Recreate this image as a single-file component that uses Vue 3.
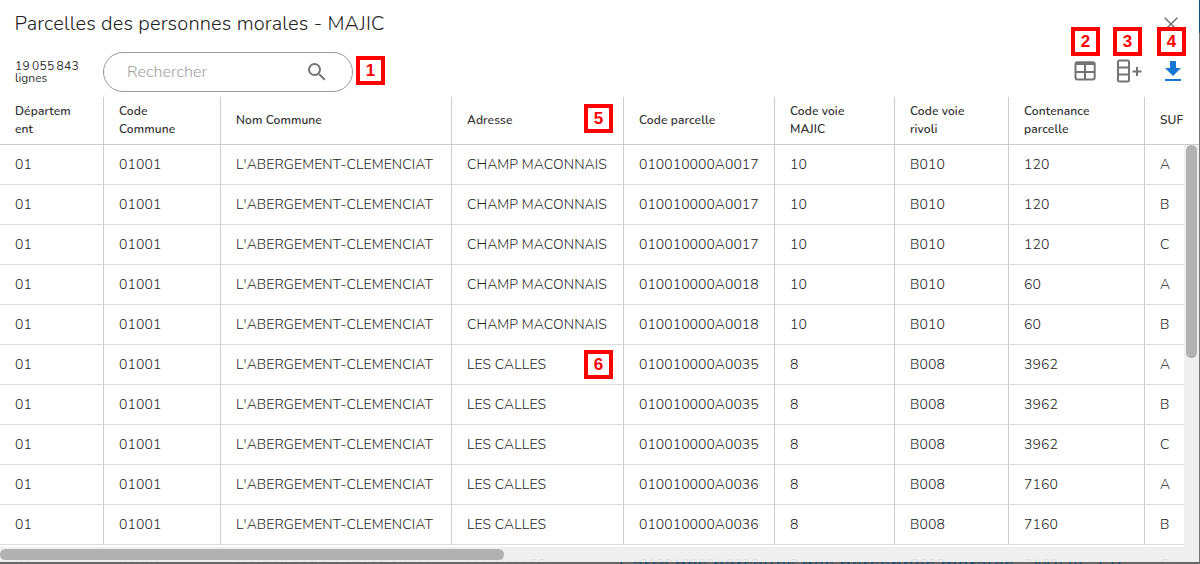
<script setup>
const columns = [
  { label: ['Départem', 'ent'], cls: 'dep' },
  { label: ['Code', 'Commune'], cls: 'code' },
  { label: ['Nom Commune'], cls: 'nom' },
  { label: ['Adresse'], cls: 'adr' },
  { label: ['Code parcelle'], cls: 'parc' },
  { label: ['Code voie', 'MAJIC'], cls: 'voie' },
  { label: ['Code voie', 'rivoli'], cls: 'rivoli' },
  { label: ['Contenance', 'parcelle'], cls: 'cont' },
  { label: ['SUF'], cls: 'suf' },
]
const source = [
  ['0017', 'A'], ['0017', 'B'], ['0017', 'C'],
  ['0018', 'A'], ['0018', 'B'],
  ['0035', 'A'], ['0035', 'B'], ['0035', 'C'],
  ['0036', 'A'], ['0036', 'B'], ['0036', 'C'],
]
const areas = { '0017': '120', '0018': '60', '0035': '3962', '0036': '7160' }
const rows = source.map(([parcel, suf]) => {
  const champ = parcel < '0030'
  return ['01', '01001', "L'ABERGEMENT-CLEMENCIAT", champ ? 'CHAMP MACONNAIS' : 'LES CALLES',
    '010010000A' + parcel, champ ? '10' : '8', champ ? 'B010' : 'B008', areas[parcel], suf]
})
</script>

<template>
  <main class="window">
    <header class="title">Parcelles des personnes morales - MAJIC</header>
    <svg class="close" width="14" height="14" viewBox="0 0 14 14"><path d="M.7.7l12.6 12.6M13.3.7L.7 13.3" /></svg>
    <section class="toolbar">
      <div class="count"><span class="number">19 055 843</span><br>lignes</div>
      <div class="search">
        <span class="placeholder">Rechercher</span>
        <svg width="24" height="24" viewBox="0 0 24 24"><path d="M15.5 14h-.79l-.28-.27A6.47 6.47 0 0 0 16 9.5 6.5 6.5 0 1 0 9.5 16c1.61 0 3.09-.59 4.23-1.57l.27.28v.79l5 4.99L20.49 19l-4.99-5zm-6 0C7.01 14 5 11.99 5 9.5S7.01 5 9.5 5 14 7.01 14 9.5 11.99 14 9.5 14z" /></svg>
      </div>
      <div class="tools">
        <svg class="grid-icon" width="22" height="20" viewBox="0 0 22 20"><rect x="1.5" y="1.2" width="19.2" height="17.2" rx="2" /><path d="M1.5 3h19.2M1.5 11h19.2M11 4v14" /></svg>
        <svg class="add-icon" width="26" height="24" viewBox="0 0 26 24"><rect x="2" y="1.5" width="11" height="21" rx="1.5" /><path d="M2 8.5h11M2 15.5h11M16.5 12.5h9M21 8v9" /></svg>
        <svg class="download-icon" width="16" height="20" viewBox="0 0 16 20"><path d="M5 0h6v7h5l-8 8-8-8h5zM0 18h16v2H0z" /></svg>
      </div>
    </section>
    <section class="table">
      <div class="row head">
        <div v-for="c in columns" :key="c.cls" class="cell" :class="c.cls">
          <span v-for="l in c.label" :key="l">{{ l }}</span>
        </div>
      </div>
      <div v-for="(r, i) in rows" :key="i" class="row">
        <div v-for="(v, j) in r" :key="j" class="cell" :class="columns[j].cls"><span>{{ v }}</span></div>
      </div>
    </section>
    <div class="vscroll"><div class="vthumb"></div></div>
    <div class="hscroll"><div class="hthumb"></div></div>
    <div class="edge"></div>
    <div class="backdrop"><span>Carte des parcelles des personnes morales - MAJIC (2)</span></div>
    <b class="mark m1">1</b><b class="mark m2">2</b><b class="mark m3">3</b>
    <b class="mark m4">4</b><b class="mark m5">5</b><b class="mark m6">6</b>
  </main>
</template>

<style>
html, body { overflow: hidden; background: #fff; }
</style>
<style scoped>
.window { position: relative; width: 1200px; height: 564px; overflow: hidden; background: #fff; font-family: Nunito, "Open Sans", sans-serif; color: #333; box-sizing: border-box; }
.title { height: 52px; padding: 11px 15px 0 14.5px; box-sizing: border-box; font-size: 20px; line-height: 26px; font-weight: 300; white-space: nowrap; letter-spacing: .15px; color: #222; }
.close { position: absolute; left: 1164px; top: 17px; }
.close path { stroke: #777; stroke-width: 1.6; fill: none; }
.toolbar { display: flex; height: 45px; align-items: flex-start; }
.count { width: 88px; padding: 8px 0 0 15px; box-sizing: border-box; font-size: 12px; line-height: 12px; white-space: nowrap; }
.number { letter-spacing: .2px; word-spacing: -1px; }
.search { width: 250px; height: 40px; margin-left: 15px; border: 1px solid #999; border-radius: 20px; box-sizing: border-box; display: flex; align-items: center; justify-content: space-between; padding: 0 23px; }
.placeholder { color: #a2a2a2; font-size: 16px; font-weight: 300; letter-spacing: .1px; }
.search svg { fill: #757575; }
.tools { margin-left: auto; padding-right: 19px; height: 40px; display: flex; align-items: center; }
.grid-icon rect, .add-icon rect, .grid-icon path, .add-icon path { fill: none; stroke: #757575; stroke-width: 2; }
.grid-icon { margin-top: -2px; }
.add-icon { margin: -2px 23px 0 20px; }
.download-icon { fill: #1976d2; margin-top: -2px; }
.row { display: grid; grid-template-columns: 104px 117px 231px 172px 151px 120px 114px 136px 55px; height: 40px; width: 1200px; }
.head { height: 48px; }
.cell { border-right: 1px solid #ccc; border-bottom: 1px solid #ddd; box-sizing: border-box; padding: 0 0 0 15px; display: flex; flex-direction: column; justify-content: center; white-space: nowrap; font-size: 14px; line-height: 20px; font-weight: 300; letter-spacing: .1px; color: #222; }
.cell.parc { letter-spacing: .03px; }
.head .cell { font-size: 12px; line-height: 18px; font-weight: 600; letter-spacing: .11px; padding-bottom: 2px; border-bottom-color: #ccc; color: #333; }
.cell.suf { border-right: 0; }
.row:last-child .cell { border-color: transparent; }
.vscroll { position: absolute; left: 1184px; top: 145px; width: 15px; height: 402px; background: #efefef; }
.vthumb { width: 11px; height: 213px; margin-left: 2px; border-radius: 6px; background: #b1b1b1; }
.hscroll { position: absolute; left: 0; top: 547px; width: 1199px; height: 15px; background: rgba(238, 238, 238, .93); }
.hthumb { width: 504px; height: 11px; position: relative; top: 2px; border-radius: 6px; background: #b1b1b1; }
.edge { position: absolute; right: 0; top: 0; width: 1px; height: 564px; background: linear-gradient(#174f82 33px, #777 33px); }
.backdrop { position: absolute; left: 0; top: 562px; width: 1200px; height: 2px; background: #666; overflow: hidden; }
.backdrop span { position: absolute; left: 619px; top: -7px; font-size: 20px; line-height: 20px; letter-spacing: .25px; color: #174b72; white-space: nowrap; }
.mark { position: absolute; width: 29px; height: 29px; box-sizing: border-box; border: 4px solid red; background: #fff; color: red; font: bold 17px/22px "Liberation Sans", sans-serif; text-align: center; }
.m1 { left: 356px; top: 56px; }
.m2 { left: 1071px; top: 27px; }
.m3 { left: 1113px; top: 27px; }
.m4 { left: 1157px; top: 27px; }
.m5 { left: 584px; top: 104px; }
.m6 { left: 584px; top: 350px; }
</style>
